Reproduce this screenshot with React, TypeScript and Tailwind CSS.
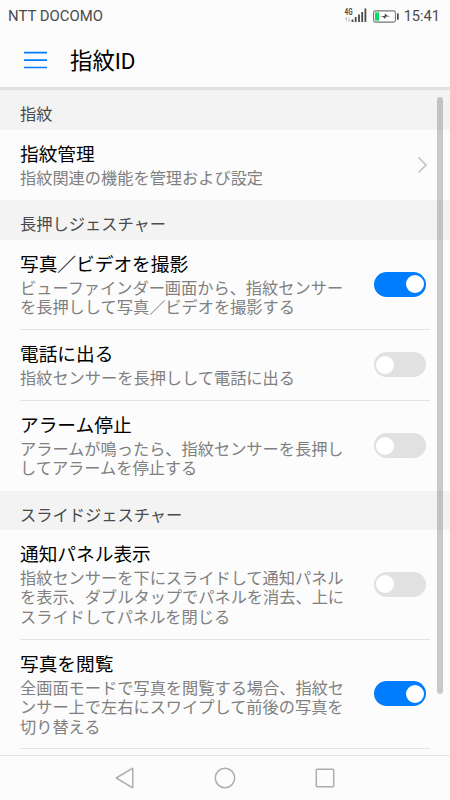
import clsx from 'clsx'

type Item = {
  title: string
  lines: string[]
  height: string
  // 未指定の場合は矢印付きの行になる
  on?: boolean
  divider?: boolean
}

type Section = {
  label: string
  height: string
  items: Item[]
}

const sections: Section[] = [
  {
    label: '指紋',
    height: 'h-10',
    items: [{ title: '指紋管理', lines: ['指紋関連の機能を管理および設定'], height: 'h-[70px]' }],
  },
  {
    label: '長押しジェスチャー',
    height: 'h-10',
    items: [
      {
        title: '写真／ビデオを撮影',
        lines: ['ビューファインダー画面から、指紋センサー', 'を長押しして写真／ビデオを撮影する'],
        height: 'h-[90px]',
        on: true,
        divider: true,
      },
      {
        title: '電話に出る',
        lines: ['指紋センサーを長押しして電話に出る'],
        height: 'h-[71px]',
        on: false,
        divider: true,
      },
      {
        title: 'アラーム停止',
        lines: ['アラームが鳴ったら、指紋センサーを長押し', 'してアラームを停止する'],
        height: 'h-[90px]',
        on: false,
      },
    ],
  },
  {
    label: 'スライドジェスチャー',
    height: 'h-[39px]',
    items: [
      {
        title: '通知パネル表示',
        lines: ['指紋センサーを下にスライドして通知パネル', 'を表示、ダブルタップでパネルを消去、上に', 'スライドしてパネルを閉じる'],
        height: 'h-[110px]',
        on: false,
        divider: true,
      },
      {
        title: '写真を閲覧',
        lines: ['全画面モードで写真を閲覧する場合、指紋セ', 'ンサー上で左右にスワイプして前後の写真を', '切り替える'],
        height: 'h-[109px]',
        on: true,
        divider: true,
      },
    ],
  },
]

function StatusBar() {
  return (
    <div className="flex h-8 items-center justify-between pl-2 pr-[10px] font-['Roboto','Noto_Sans_CJK_JP',sans-serif] text-[#4a4a4a]">
      <span className="text-[14.9px] leading-8">NTT DOCOMO</span>
      <div className="flex items-center">
        {/* 電波 */}
        <svg className="mr-[6px] h-4 w-[23px]" viewBox="0 0 23 16">
          <text x="0.5" y="6.8" fontSize="8.4" fontWeight="700" textLength="8" lengthAdjust="spacingAndGlyphs" fill="#4a4a4a">4G</text>
          <path d="M2.5 13.5V9.5M1.2 10.8L2.5 9.3M5 9.5v4M6.3 12.2L5 13.7" stroke="#b8b8b8" strokeWidth="0.9" fill="none" />
          <path d="M8.5 14v-2.5M11.7 14V9M15 14V6.5M18.2 14V4M21.4 14V0.5" stroke="#4a4a4a" strokeWidth="1.8" />
        </svg>
        {/* バッテリー */}
        <svg className="mr-[5px] h-[13px] w-[26px]" viewBox="0 0 26 13">
          <rect x="0.6" y="0.9" width="21.8" height="11.2" rx="1.8" fill="#fff" stroke="#777" strokeWidth="1.1" />
          <rect x="2" y="2.4" width="4" height="8.2" fill="#0edb63" />
          <path d="M6.8 6.2l4.8-.3.3-2.3 2.6 2.1 2.9.6-4.8.4-.4 2.3-2.5-2.2z" fill="#4a4a4a" />
          <rect x="24" y="3.2" width="1.7" height="6.6" rx="0.6" fill="#4a4a4a" />
        </svg>
        <span className="text-[14.6px] leading-8">15:41</span>
      </div>
    </div>
  )
}

function Toggle({ on }: { on: boolean }) {
  return (
    <button
      className={clsx(
        'flex h-[25px] w-[52px] items-center rounded-full',
        on ? 'justify-end bg-[#007dff] pr-[2px]' : 'justify-start bg-[#e1e1e1] pl-[2px]',
      )}
    >
      <span className="h-[18px] w-[18px] rounded-full bg-white" />
    </button>
  )
}

function Row({ item }: { item: Item }) {
  return (
    <div className={clsx('mx-5 flex justify-between', item.height, item.divider && 'border-b border-[#e4e4e4]')}>
      <div className="pt-[9px]">
        <h2 className="mb-px text-[18.7px] leading-7 text-black">{item.title}</h2>
        <p className="whitespace-nowrap text-[16.22px] leading-[19.3px] text-[#808080]">
          {item.lines.map((line) => (
            <span key={line} className="block">
              {line}
            </span>
          ))}
        </p>
      </div>
      <div className="flex items-center pb-px pr-1">
        {item.on === undefined ? (
          <svg className="-mr-[2px] h-[18px] w-[11px]" viewBox="0 0 11 18" fill="none" stroke="#c2c2c2" strokeWidth="1.6">
            <path d="M1.5 1.5L9 9l-7.5 7.5" />
          </svg>
        ) : (
          <Toggle on={item.on} />
        )}
      </div>
    </div>
  )
}

export default function App() {
  return (
    <div className="relative flex h-[800px] w-[450px] flex-col overflow-hidden bg-[#fcfcfc] font-['Noto_Sans_CJK_JP',sans-serif]">
      <StatusBar />

      {/* ヘッダー */}
      <header className="flex h-[58px] items-center border-b-[3px] border-[#e1e1e1] pl-6">
        <svg className="h-[18px] w-[23px]" viewBox="0 0 23 18" stroke="#007dff" strokeWidth="1.7">
          <path d="M0 1.6h23M0 9.1h23M0 16.5h23" />
        </svg>
        <h1 className="ml-[23px] text-[22.4px] leading-8 text-black">
          指紋<span className="font-['Roboto',sans-serif]">ID</span>
        </h1>
      </header>

      {/* 設定一覧 */}
      <main className="h-[665px] overflow-hidden">
        {sections.map((section) => (
          <section key={section.label}>
            <div className={clsx('flex items-center bg-[#f3f3f3] px-5 pt-[6px] text-[16.25px] leading-6 text-[#4a4a4a]', section.height)}>
              {section.label}
            </div>
            {section.items.map((item) => (
              <Row key={item.title} item={item} />
            ))}
          </section>
        ))}
      </main>

      {/* スクロールバー */}
      <div className="absolute left-[437px] top-[97px] h-[597px] w-[6px] rounded-full bg-black/20" />

      {/* ナビゲーションバー */}
      <nav className="flex h-[45px] items-center justify-center gap-[78px] border-t border-[#e4e4e4]">
        <svg className="h-[22px] w-[22px]" viewBox="0 0 22 22" fill="none" stroke="#adadad" strokeWidth="1.5" strokeLinejoin="round">
          <path d="M18.8 1.2v19.6L2.2 11z" />
        </svg>
        <svg className="h-[22px] w-[22px]" viewBox="0 0 22 22" fill="none" stroke="#adadad" strokeWidth="1.5">
          <circle cx="11" cy="11" r="9.7" />
        </svg>
        <svg className="h-[22px] w-[22px]" viewBox="0 0 22 22" fill="none" stroke="#adadad" strokeWidth="1.5">
          <rect x="2.3" y="2.3" width="17.4" height="17.4" rx="0.8" />
        </svg>
      </nav>
    </div>
  )
}
